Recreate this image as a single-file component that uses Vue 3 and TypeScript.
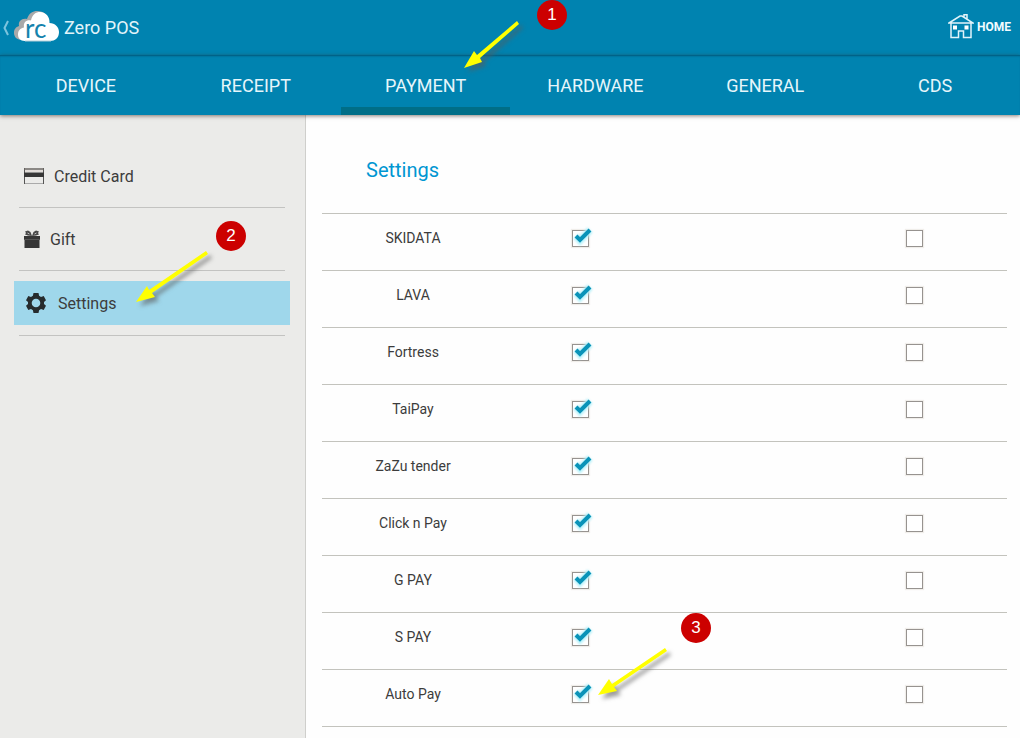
<script setup lang="ts">
import { ref } from 'vue'

interface Tender {
  name: string
  enabled: boolean
  extra: boolean
}

const tabs: string[] = ['DEVICE', 'RECEIPT', 'PAYMENT', 'HARDWARE', 'GENERAL', 'CDS']
const activeTab = ref('PAYMENT')

const sections: string[] = ['Credit Card', 'Gift', 'Settings']
const activeSection = ref('Settings')

const tenders = ref<Tender[]>(
  ['SKIDATA', 'LAVA', 'Fortress', 'TaiPay', 'ZaZu tender', 'Click n Pay', 'G PAY', 'S PAY', 'Auto Pay'].map(
    (name) => ({ name, enabled: true, extra: false })
  )
)

const arrows: string[] = [
  'M464 68 L474 51 L477 55 L517 21 L519 24 L480 58 L482 62 Z',
  'M136 302 L147 286 L149 290 L206 251 L208 254 L152 293 L155 297 Z',
  'M598 695 L609 679 L612 684 L665 648 L667 651 L614 687 L617 691 Z'
]
</script>

<template>
  <div class="page">
    <header class="bar">
      <button class="brand" type="button" aria-label="Back">
        <svg class="chevron" width="8" height="18" viewBox="0 0 8 18" aria-hidden="true">
          <path d="M6 2 L2.5 9 L6 16" fill="none" stroke="#7cc4de" stroke-width="2" />
        </svg>
        <svg class="cloud" width="46" height="36" viewBox="0 0 46 36" aria-hidden="true">
          <path d="M8 30 C2 30 0 26 0 23 C0 19 2 17 5 16 C4 11 8 8 13 9 C15 3 19 1 23 1 C30 1 34 5 34 11 L30 30 Z" fill="#a9a9a9" />
          <path d="M11 31 C6 31 4 28 4 24.500 C4 20 7 18 10 17.500 C9 12 13 9.500 17 10.500 C18 4.500 22 2 26 2 C32 2 36 7 35.500 13 C41 13 45 17 45 22 C45 28 41 31 36 31 Z" fill="#fff" />
          <path d="M11 31 H37" stroke="#b5ced8" stroke-width="1" />
          <text x="11" y="28" class="logo-text">rc</text>
        </svg>
        <span class="title">Zero POS</span>
      </button>
      <a class="home" href="#home">
        <svg width="26" height="26" viewBox="0 0 26 26" aria-hidden="true">
          <g fill="none" stroke="#e2f4fa" stroke-width="1.500">
            <path d="M1 9 L12 2 L14 2 L25 9 Z M16 3 V0.800 H19 V5" />
            <path d="M3 9 V23.500 H10.500 V17 H15.500 V23.500 H23 V9" />
          </g>
          <path d="M5 11.500 h4 v4 h-4 Z M16.500 11.500 h4 v4 h-4 Z" fill="#fff" />
        </svg>
        <span>HOME</span>
      </a>
    </header>

    <nav class="tabs">
      <button
        v-for="tab in tabs"
        :key="tab"
        type="button"
        :class="['tab', { current: tab === activeTab }]"
        @click="activeTab = tab"
      >
        {{ tab }}
      </button>
    </nav>

    <div class="body">
      <aside class="side">
        <ul>
          <li v-for="section in sections" :key="section" :class="{ selected: section === activeSection }">
            <button type="button" @click="activeSection = section">
              <svg v-if="section === 'Credit Card'" width="20" height="16" viewBox="0 0 20 16" aria-hidden="true">
                <path d="M0.500 0 V16 M19.500 0 V16" stroke="#555" />
                <path d="M0 1 H20" stroke="#6b6763" stroke-width="1.500" />
                <path d="M1 3 H19" stroke="#d8cfca" />
                <path d="M1 15.500 H19" stroke="#aaa" />
                <path d="M0 4.500 H20 V9 H0 Z" fill="#363636" />
              </svg>
              <svg v-else-if="section === 'Gift'" width="16" height="18" viewBox="0 0 16 18" aria-hidden="true">
                <path d="M0 6 H16 V10 H0 Z M0.500 9.500 H15.500 V18 H0.500 Z" fill="#363636" />
                <path d="M8 6 L4 5.500 L1 4.500 L2 3 L1 1.500 L4 0.500 L6.500 2 Z M8 6 L12 5.500 L15 4.500 L14 3 L15 1.500 L12 0.500 L9.500 2 Z" fill="#484848" />
                <path d="M3.500 3 L5.500 4 M12.500 3 L10.500 4" fill="none" stroke="#bbb" />
                <path d="M0 9.500 H16" stroke="#777" stroke-width="0.500" />
              </svg>
              <svg v-else width="20" height="20" viewBox="0 0 20 20" aria-hidden="true">
                <path
                  fill="#262b2d"
                  fill-rule="evenodd"
                  d="M7.500 0 H12.500 L13.100 2.800 L15 3.900 L17.700 3 L20 7.200 L18 9 V11 L20 12.800 L17.700 17 L15 16.100 L13.100 17.200 L12.500 20 H7.500 L6.900 17.200 L5 16.100 L2.300 17 L0 12.800 L2 11 V9 L0 7.200 L2.300 3 L5 3.900 L6.900 2.800 Z M10 5.700 A4.300 4.300 0 1 0 10 14.300 A4.300 4.300 0 1 0 10 5.700 Z"
                />
              </svg>
              <span>{{ section }}</span>
            </button>
          </li>
        </ul>
      </aside>

      <main class="content">
        <h1>Settings</h1>
        <table>
          <tbody>
            <tr v-for="tender in tenders" :key="tender.name">
              <th scope="row">{{ tender.name }}</th>
              <td class="first">
                <label class="box">
                  <input v-model="tender.enabled" type="checkbox" :aria-label="tender.name + ' enabled'" />
                  <svg v-if="tender.enabled" width="25" height="22" viewBox="0 0 25 22" aria-hidden="true">
                    <path class="glow" d="M6 11 L10 15.500 L20 5" />
                    <path class="tick" d="M6 11 L10 15 L20 5" />
                  </svg>
                </label>
              </td>
              <td class="second">
                <label class="box">
                  <input v-model="tender.extra" type="checkbox" :aria-label="tender.name + ' option'" />
                  <svg v-if="tender.extra" width="25" height="22" viewBox="0 0 25 22" aria-hidden="true">
                    <path class="glow" d="M6 11 L10 15.500 L20 5" />
                    <path class="tick" d="M6 11 L10 15 L20 5" />
                  </svg>
                </label>
              </td>
            </tr>
          </tbody>
        </table>
      </main>
    </div>

    <svg class="arrows" width="720" height="720" viewBox="0 0 720 720" aria-hidden="true">
      <path v-for="d in arrows" :key="d" :d="d" />
    </svg>
    <span class="step step-one">1</span>
    <span class="step step-two">2</span>
    <span class="step step-three">3</span>
  </div>
</template>

<style>
body {
  margin: 0;
}
</style>

<style scoped>
.page {
  position: relative;
  display: flex;
  flex-direction: column;
  min-height: 100vh;
  background: #fefefe;
  color: #3c3c3c;
  font-family: Roboto, "Liberation Sans", sans-serif;
}

button {
  border: 0;
  background: none;
  color: inherit;
  font-family: inherit;
  cursor: pointer;
}

.bar {
  display: flex;
  align-items: center;
  justify-content: space-between;
  height: 55px;
  padding: 0 9px 0 2px;
  box-sizing: border-box;
  background: #0083b0;
  color: #e2f4fa;
}

.brand {
  display: flex;
  align-items: center;
  padding: 0;
}

.cloud {
  margin: 0 4px;
}

.logo-text {
  font-family: Lato, "Open Sans", sans-serif;
  font-size: 26px;
  font-weight: 400;
  fill: #1583ad;
}

.title {
  font-size: 18px;
  line-height: 24px;
}

.home {
  display: flex;
  align-items: center;
  gap: 3px;
  padding-bottom: 2px;
  color: #f2fbff;
  font-size: 12px;
  font-weight: 700;
  text-decoration: none;
}

.tabs {
  position: relative;
  z-index: 1;
  display: flex;
  height: 60px;
  padding-left: 1px;
  background: #0083b0;
  box-shadow: inset 0 2px 2px -1px #00587a, 0 1px 4px rgba(60, 40, 30, 0.6);
}

.tab {
  flex: 1;
  padding: 8px 0 0;
  border-bottom: 8px solid transparent;
  color: #e6f6fb;
  font-size: 18px;
}

.tab.current {
  border-bottom-color: #006e87;
}

.body {
  display: flex;
  flex: 1;
}

.side {
  flex: 0 0 30%;
  box-sizing: border-box;
  padding: 30px 20px 0 19px;
  border-right: 1px solid #cfcfcc;
  background: #ebebe9;
}

.side ul {
  margin: 0;
  padding: 0;
  list-style: none;
}

.side li {
  padding: 9px 0;
  border-bottom: 1px solid #c3c3c1;
}

.side li.selected {
  padding: 10px 0;
}

.side button {
  display: flex;
  align-items: center;
  gap: 10px;
  width: calc(100% + 10px);
  height: 44px;
  margin: 0 -5px;
  padding: 0 10px;
  font-size: 16px;
}

.side .selected button {
  gap: 12px;
  padding: 0 12px;
  background: #9fd7eb;
}

.content {
  flex: 1;
  padding: 40px 13px 11px 16px;
}

h1 {
  margin: 0 0 28px;
  padding-left: 44px;
  color: #0096d2;
  font-size: 20px;
  font-weight: 400;
  line-height: 30px;
}

table {
  width: 100%;
  border-collapse: separate;
  border-spacing: 0;
  table-layout: fixed;
  border-top: 1px solid #c3c3bd;
}

th,
td {
  height: 48px;
  padding: 0 0 8px;
  border-bottom: 1px solid #c3c3bd;
}

th {
  width: 182px;
  font-size: 14px;
  font-weight: 400;
  text-align: center;
}

.first {
  width: 152px;
}

.second {
  padding-right: 84px;
}

.box {
  position: relative;
  display: block;
  width: 17px;
  height: 17px;
  margin: 0 auto;
}

.second .box {
  margin-right: 0;
}

.box input {
  display: block;
  width: 17px;
  height: 17px;
  margin: 0;
  appearance: none;
  border: 1px solid #979390;
  background: #fff;
  box-shadow: 0 0 1px 1px #f0eeea;
}

.box svg {
  position: absolute;
  top: -5px;
  left: -2px;
  pointer-events: none;
}

.tick,
.glow {
  fill: none;
  stroke: #0a93b8;
  stroke-width: 4;
}

.glow {
  stroke: #b5f1fa;
  stroke-width: 7;
  filter: blur(1px);
}

.arrows {
  position: absolute;
  top: 0;
  left: 0;
  z-index: 2;
  fill: #ffff00;
  filter: drop-shadow(4px 4px 2px rgba(90, 90, 90, 0.6));
  pointer-events: none;
}

.step {
  position: absolute;
  z-index: 3;
  width: 30px;
  height: 30px;
  border-radius: 50%;
  background: #cc0000;
  color: #fff;
  font-family: "Liberation Sans", Arial, sans-serif;
  font-size: 17px;
  line-height: 30px;
  text-align: center;
}

.step-one {
  top: 0;
  left: 537px;
}

.step-two {
  top: 221px;
  left: 216px;
}

.step-three {
  top: 613px;
  left: 681px;
}
</style>
